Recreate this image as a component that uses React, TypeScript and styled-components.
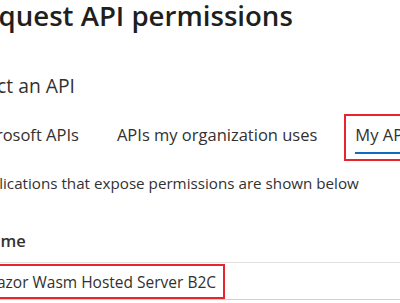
import React, { useState } from 'react';
import styled, { createGlobalStyle } from 'styled-components';

const GlobalStyle = createGlobalStyle`
  html, body {
    margin: 0;
    padding: 0;
    background: #ffffff;
    overflow: hidden;
  }
  body {
    font-family: "Open Sans", "Noto Sans", "Liberation Sans", sans-serif;
    color: #323130;
  }
`;

const Blade = styled.div`
  width: 520px;
  margin-left: -32px;
  display: flex;
  flex-direction: column;
`;

const Title = styled.h1`
  margin: 0 0 0 -3px;
  font-size: 27.6px;
  line-height: 30px;
  font-weight: 600;
  color: #201f1e;
`;

const Subtitle = styled.h2`
  margin: 44px 0 0 -8px;
  font-size: 19.3px;
  line-height: 24px;
  font-weight: 400;
`;

const TabList = styled.div`
  display: flex;
  align-items: flex-start;
  gap: 16px;
  margin: 16px 0 0 -10px;
`;

const Tab = styled.div<{ $marked: boolean }>`
  padding: 8px 9px 5px;
  border: 2px solid ${(p) => (p.$marked ? '#e8252c' : 'transparent')};
  cursor: pointer;
  white-space: nowrap;
`;

const TabLabel = styled.span<{ $active: boolean }>`
  display: block;
  font-size: 16.5px;
  line-height: 22px;
  padding-bottom: 6px;
  border-bottom: 2px solid ${(p) => (p.$active ? '#0f6cbd' : 'transparent')};
`;

const Description = styled.p`
  margin: 11px 0 0 3px;
  font-size: 15.2px;
  line-height: 22px;
`;

const Table = styled.div`
  margin-top: 36px;
  display: flex;
  flex-direction: column;
`;

const HeaderRow = styled.div`
  padding: 0 0 10px 10px;
  border-bottom: 1px solid #e1dfdd;
  font-size: 16.5px;
  line-height: 22px;
  font-weight: 600;
`;

const Row = styled.div`
  padding: 1px 0 0;
  border-bottom: 1px solid #d2d0ce;
  display: flex;
`;

const NameCell = styled.div<{ $marked: boolean }>`
  padding: 5px 7px 4px 13px;
  border: 2px solid ${(p) => (p.$marked ? '#e8252c' : 'transparent')};
  font-size: 15.5px;
  line-height: 22px;
  white-space: nowrap;
`;

const tabs = ['Microsoft APIs', 'APIs my organization uses', 'My APIs'];

function App() {
  const [current, setCurrent] = useState<string>('My APIs');

  return (
    <>
      <GlobalStyle />
      <Blade>
        <Title>Request API permissions</Title>
        <Subtitle>Select an API</Subtitle>
        <TabList>
          {tabs.map((tab) => (
            <Tab key={tab} $marked={tab === 'My APIs'} onClick={() => setCurrent(tab)}>
              <TabLabel $active={tab === current}>{tab}</TabLabel>
            </Tab>
          ))}
        </TabList>
        <Description>Applications that expose permissions are shown below</Description>
        <Table>
          <HeaderRow>Name</HeaderRow>
          <Row>
            <NameCell $marked>Blazor Wasm Hosted Server B2C</NameCell>
          </Row>
        </Table>
      </Blade>
    </>
  );
}

export default App;
